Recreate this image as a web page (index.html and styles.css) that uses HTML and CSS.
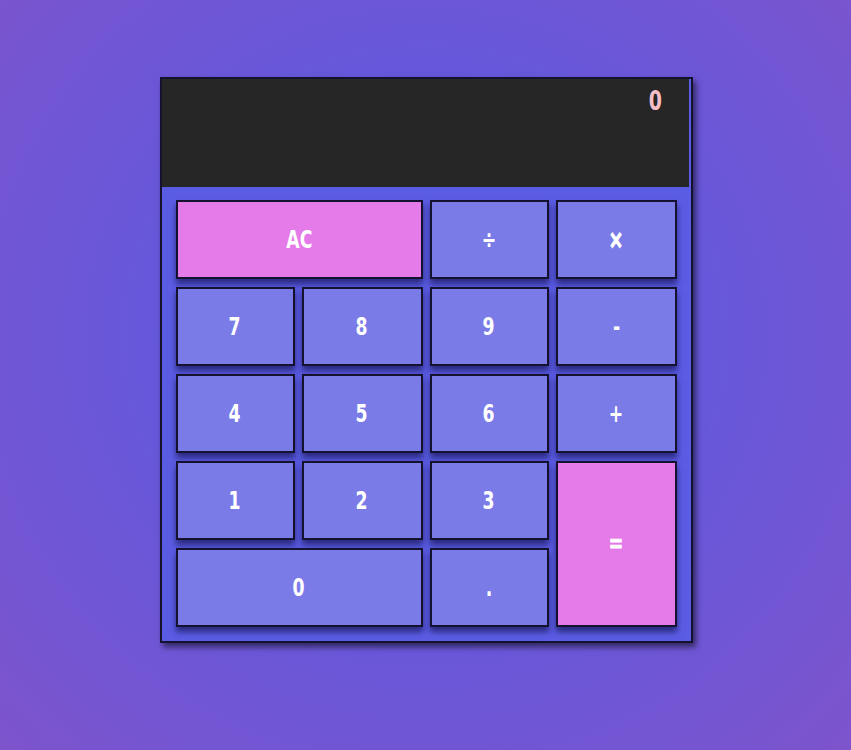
FILE: index.html
```html
<!DOCTYPE html>
<html lang="en">
<head>
<meta charset="utf-8">
<title>Calculator</title>
<link rel="stylesheet" href="styles.css">
</head>
<body>
<main class="page">
  <div class="calculator">
    <div class="display"><span class="output">0</span></div>
    <div class="keys">
      <button class="key key-accent span-two"><span class="label">AC</span></button>
      <button class="key"><span class="label">÷</span></button>
      <button class="key key-times"><span class="label">×</span></button>
      <button class="key"><span class="label">7</span></button>
      <button class="key"><span class="label">8</span></button>
      <button class="key"><span class="label">9</span></button>
      <button class="key"><span class="label">-</span></button>
      <button class="key"><span class="label">4</span></button>
      <button class="key"><span class="label">5</span></button>
      <button class="key"><span class="label">6</span></button>
      <button class="key"><span class="label">+</span></button>
      <button class="key"><span class="label">1</span></button>
      <button class="key"><span class="label">2</span></button>
      <button class="key"><span class="label">3</span></button>
      <button class="key key-accent key-equals span-rows"><span class="label">=</span></button>
      <button class="key span-two"><span class="label">0</span></button>
      <button class="key"><span class="label">.</span></button>
    </div>
  </div>
</main>
</body>
</html>
```

FILE: styles.css
```css
html, body {
  margin: 0;
  padding: 0;
  height: 100%;
}

body {
  background: radial-gradient(ellipse at 50% 45%, #5a5ae2 0%, #6358dc 40%, #7d54cc 100%);
  font-family: "DejaVu Sans Condensed", "Liberation Sans", sans-serif;
}

.page {
  display: flex;
  justify-content: center;
  padding-top: 77px;
  padding-left: 1px;
}

.calculator {
  width: 529px;
  border: 2px solid #14122e;
  background: #5b5ce4;
  box-shadow: 3px 4px 6px rgba(0, 0, 0, 0.55);
}

.display {
  width: 527px;
  height: 108px;
  background: #262626;
  display: flex;
  justify-content: flex-end;
  align-items: flex-start;
  box-sizing: border-box;
  padding: 5px 25px 0 0;
}

.output {
  display: inline-block;
  color: #f6bfc8;
  font-weight: bold;
  font-size: 27px;
  line-height: 34px;
  transform: scaleX(0.78);
}

.keys {
  display: grid;
  grid-template-columns: 119px 121px 119px 121px;
  grid-auto-rows: 79px;
  column-gap: 7px;
  row-gap: 8px;
  padding: 13px 14px 14px 14px;
}

.key {
  background: #7b7be8;
  border: 2px solid #14122e;
  color: #ffffff;
  font-family: inherit;
  font-weight: bold;
  font-size: 24px;
  padding: 0;
  margin: 0;
  box-shadow: 0 5px 6px rgba(10, 8, 60, 0.6);
  cursor: pointer;
}

.label {
  display: inline-block;
  transform: scaleX(0.8);
}

.key-times {
  font-size: 24px;
  -webkit-text-stroke: 1.2px #ffffff;
}

.key-equals {
  -webkit-text-stroke: 0.8px #ffffff;
}

.key-accent {
  background: #e47be8;
}

.span-two {
  grid-column: span 2;
}

.span-rows {
  grid-row: span 2;
}
```
